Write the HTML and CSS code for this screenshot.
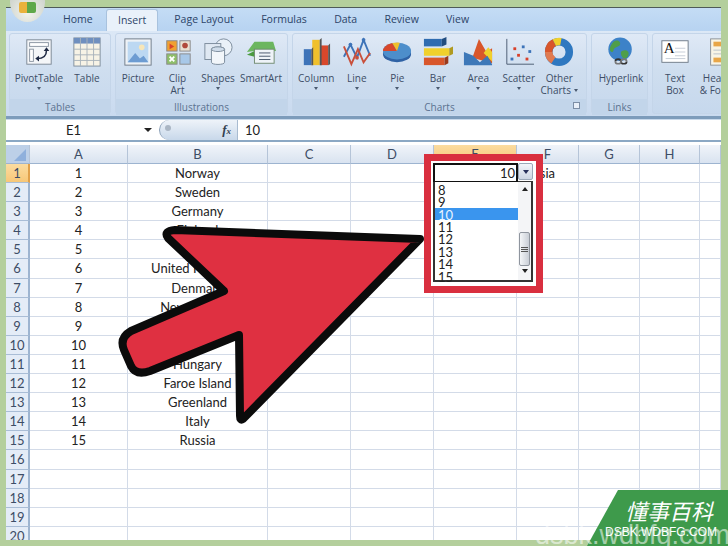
FILE: index.html
```html
<!DOCTYPE html>
<html lang="en">
<head>
  <meta charset="UTF-8">
  <title>Excel dropdown</title>
  <link rel="stylesheet" href="styles.css">
</head>
<body>
  <div class="window">
    <!-- Tabs -->
    <div class="tabs">
      <span class="tab">Home</span>
      <span class="tab active">Insert</span>
      <span class="tab">Page Layout</span>
      <span class="tab">Formulas</span>
      <span class="tab">Data</span>
      <span class="tab">Review</span>
      <span class="tab">View</span>
    </div>

    <!-- Ribbon -->
    <div class="ribbon">
      <div class="group g-tables">
        <div class="items">
          <div class="item w54">
            <svg class="icon" viewBox="0 0 32 32"><rect x="3" y="3" width="26" height="26" fill="#f4f6f8" stroke="#7c8794"/><rect x="6" y="6" width="20" height="4" fill="#fff" stroke="#8a94a0"/><rect x="6" y="13" width="4" height="13" fill="#fff" stroke="#8a94a0"/><path d="M14 23c6 0 10-3 10-9" fill="none" stroke="#1f2a44" stroke-width="1.6"/><path d="M21 15l3-4 3 4zM16 20l-4 3 4 3z" fill="#1f2a44"/></svg>
            <span class="label">PivotTable</span><i class="caret"></i>
          </div>
          <div class="item w42">
            <svg class="icon" viewBox="0 0 32 32"><rect x="2" y="1" width="28" height="30" fill="#f7f3e6" stroke="#7f8d9d"/><rect x="2" y="1" width="28" height="6" fill="#6f8fbf"/><path d="M2 13h28M2 19h28M2 25h28M9 1v30M16 1v30M23 1v30" stroke="#a9b2bb" fill="none"/></svg>
            <span class="label">Table</span>
          </div>
        </div>
        <div class="group-name">Tables</div>
      </div>

      <div class="group g-illus">
        <div class="items">
          <div class="item w40">
            <svg class="icon" viewBox="0 0 32 32"><rect x="2" y="2" width="28" height="28" fill="#eef2f6" stroke="#6f7b88"/><rect x="5" y="5" width="22" height="22" fill="#bcd8f2"/><circle cx="20" cy="11" r="3" fill="#f7e6b8"/><path d="M5 27l8-10 5 6 4-3 5 7z" fill="#6d9cd2"/></svg>
            <span class="label">Picture</span>
          </div>
          <div class="item w39">
            <svg class="icon" viewBox="0 0 32 32"><rect x="4" y="4" width="11" height="11" fill="#f0a030" stroke="#8a8a8a"/><path d="M7 7l5 3-5 3z" fill="#d8402a"/><rect x="18" y="4" width="11" height="11" fill="#e8e0d0" stroke="#8a8a8a"/><circle cx="23.500" cy="9" r="3" fill="#b04a3a"/><rect x="4" y="18" width="11" height="11" fill="#8fc06a" stroke="#8a8a8a"/><path d="M7 21l5 5M12 21l-5 5" stroke="#fff" stroke-width="2"/><rect x="18" y="18" width="11" height="11" fill="#a8c8e8" stroke="#8a8a8a"/></svg>
            <span class="label">Clip<br>Art</span>
          </div>
          <div class="item w42">
            <svg class="icon" viewBox="0 0 32 32"><circle cx="22" cy="11" r="9" fill="#eaf1f8" stroke="#7a8a9a"/><rect x="2" y="7" width="17" height="17" fill="#dfe8f2" stroke="#7a8a9a"/><path d="M9 13c0-3 14-3 14 0v14c0 3-14 3-14 0z" fill="#f2f6fa" stroke="#7a8a9a"/><ellipse cx="16" cy="13" rx="7" ry="2.500" fill="#cfdcea" stroke="#7a8a9a"/></svg>
            <span class="label">Shapes</span><i class="caret"></i>
          </div>
          <div class="item w44">
            <svg class="icon" viewBox="0 0 32 32"><path d="M1 16L9 5h20l3 10-3 0H9z" fill="#5fb04f" opacity=".9"/><path d="M1 19l8-4v6z" fill="#4a9a3f"/><rect x="9" y="13" width="21" height="15" fill="#eef3f8" stroke="#6f8a6f"/><path d="M14 17h12M14 20.500h12M14 24h12" stroke="#44546a"/></svg>
            <span class="label">SmartArt</span>
          </div>
        </div>
        <div class="group-name">Illustrations</div>
      </div>

      <div class="group g-charts">
        <div class="items">
          <div class="item w40h">
            <svg class="icon" viewBox="0 0 32 32"><rect x="3" y="13" width="8" height="17" fill="#3d73b8"/><rect x="12" y="3" width="8" height="27" fill="#f0c02c"/><rect x="21" y="9" width="8" height="21" fill="#d8472b"/><path d="M11 13l2-2v19l-2 0zM20 3l2-2v29h-2zM29 9l2-2v22l-2 1z" fill="#555"/></svg>
            <span class="label">Column</span><i class="caret"></i>
          </div>
          <div class="item w40h">
            <svg class="icon" viewBox="0 0 32 32"><path d="M2 21L9 8l7 14 7-19 7 17" fill="none" stroke="#3d73b8" stroke-width="2"/><path d="M2 10l8 19 7-16 6 14 7-10" fill="none" stroke="#c9503c" stroke-width="2"/><circle cx="9" cy="8" r="2" fill="#3d73b8"/><circle cx="16" cy="22" r="2" fill="#c9503c"/><circle cx="23" cy="3" r="2" fill="#3d73b8"/></svg>
            <span class="label">Line</span><i class="caret"></i>
          </div>
          <div class="item w40h">
            <svg class="icon" viewBox="0 0 32 32"><ellipse cx="16" cy="18" rx="15" ry="9" fill="#2f62a5"/><ellipse cx="16" cy="15" rx="15" ry="9" fill="#4d8ecb"/><path d="M16 15L1 15a15 9 0 0 1 10-8.500z" fill="#d8472b"/><path d="M16 15l-5-8.500a15 9 0 0 1 8-.5z" fill="#f0c02c"/></svg>
            <span class="label">Pie</span><i class="caret"></i>
          </div>
          <div class="item w40h">
            <svg class="icon" viewBox="0 0 32 32"><rect x="1" y="2" width="19" height="8" fill="#2f6cb0"/><path d="M20 2l5-2v8l-5 2z" fill="#214d80"/><rect x="1" y="12" width="27" height="8" fill="#f0d02c"/><path d="M28 12l4-2v8l-4 2z" fill="#b09a20"/><rect x="1" y="22" width="22" height="8" fill="#d8562b"/><path d="M23 22l4-2v8l-4 2z" fill="#9a3a1c"/></svg>
            <span class="label">Bar</span><i class="caret"></i>
          </div>
          <div class="item w40h">
            <svg class="icon" viewBox="0 0 32 32"><path d="M10 22l7-20 8 14 6-4v16z" fill="#d8562b"/><path d="M22 17l5-6 4 5v10z" fill="#f0d02c"/><path d="M1 16l10 4 7 7 8-7 5 9v1H1z" fill="#3d78b8"/></svg>
            <span class="label">Area</span><i class="caret"></i>
          </div>
          <div class="item w40h">
            <svg class="icon" viewBox="0 0 32 32"><path d="M3 2v27h29" fill="none" stroke="#4a5a70" stroke-width="1"/><g fill="#d8402a"><rect x="14" y="18" width="3" height="3"/><rect x="23" y="22" width="3" height="3"/><rect x="10" y="11" width="3" height="3"/></g><g fill="#3d73b8"><rect x="7" y="22" width="3" height="3"/><rect x="19" y="9" width="3" height="3"/><rect x="26" y="14" width="3" height="3"/></g></svg>
            <span class="label">Scatter</span><i class="caret"></i>
          </div>
          <div class="item w40h">
            <svg class="icon" viewBox="0 0 32 32"><circle cx="16" cy="16" r="11" fill="none" stroke="#2f78c0" stroke-width="8"/><path d="M5 16A11 11 0 0 1 11 6" fill="none" stroke="#d8562b" stroke-width="8"/><path d="M11 6a11 11 0 0 1 7-1" fill="none" stroke="#f0d02c" stroke-width="8"/><path d="M5 16a11 11 0 0 0 5 9" fill="none" stroke="#e07a50" stroke-width="8"/></svg>
            <span class="label">Other<br>Charts<i class="caret side"></i></span>
          </div>
        </div>
        <div class="group-name">Charts<i class="launcher"></i></div>
      </div>

      <div class="group g-links">
        <div class="items">
          <div class="item w54">
            <svg class="icon" viewBox="0 0 32 32"><circle cx="15" cy="13" r="12.500" fill="#3d82c8"/><path d="M8 5c4-3 8 0 7 3s-6 2-7 6-4 1-4-1 2-6 4-8zM17 15c4-2 8 0 7 4s-4 5-6 3-3-6-1-7z" fill="#4f9e4a"/><path d="M10 26a3 2.500 0 0 1 6 0M16 26a3 2.500 0 0 0 6 0" fill="none" stroke="#333" stroke-width="1.800"/><path d="M10 26a3 2.500 0 0 0 6 0M16 26a3 2.500 0 0 1 6 0" fill="none" stroke="#777" stroke-width="1.800"/></svg>
            <span class="label">Hyperlink</span>
          </div>
        </div>
        <div class="group-name">Links</div>
      </div>

      <div class="group g-text">
        <div class="items">
          <div class="item w40">
            <svg class="icon" viewBox="0 0 32 32"><rect x="2" y="4" width="28" height="23" fill="#fff" stroke="#6f7b88"/><path d="M16 12h11M16 16h11M16 20h11M6 23h21" stroke="#c4ccd6"/><text x="4" y="17" class="icon-a">A</text></svg>
            <span class="label">Text<br>Box</span>
          </div>
          <div class="item w50">
            <svg class="icon" viewBox="0 0 32 32"><rect x="6" y="2" width="22" height="28" fill="#f8f4e6" stroke="#8a8f96"/><rect x="9" y="5" width="16" height="5" fill="#e8a648"/><rect x="9" y="22" width="16" height="5" fill="#e8a648"/><path d="M9 14h16M9 18h16" stroke="#b9c0c8"/></svg>
            <span class="label">Header<br>&amp; Footer</span>
          </div>
        </div>
      </div>
    </div>

    <!-- Formula bar -->
    <div class="formula-bar">
      <div class="name-box">E1<i class="name-arrow"></i></div>
      <div class="fx-pill"><i class="fx-knob"></i><span class="fx">f<small>x</small></span></div>
      <div class="formula">10</div>
    </div>

    <!-- Sheet -->
    <div class="sheet">
      <div class="row head"><div class="corner"><i></i></div><div>A</div><div>B</div><div>C</div><div>D</div><div class="hot">E</div><div>F</div><div>G</div><div>H</div><div></div></div>
      <div class="row"><div class="num hot">1</div><div>1</div><div>Norway</div><div></div><div></div><div></div><div class="left">Russia</div><div></div><div></div><div></div></div>
      <div class="row"><div class="num">2</div><div>2</div><div>Sweden</div><div></div><div></div><div></div><div></div><div></div><div></div><div></div></div>
      <div class="row"><div class="num">3</div><div>3</div><div>Germany</div><div></div><div></div><div></div><div></div><div></div><div></div><div></div></div>
      <div class="row"><div class="num">4</div><div>4</div><div>Finland</div><div></div><div></div><div></div><div></div><div></div><div></div><div></div></div>
      <div class="row"><div class="num">5</div><div>5</div><div>France</div><div></div><div></div><div></div><div></div><div></div><div></div><div></div></div>
      <div class="row"><div class="num">6</div><div>6</div><div>United Kingdom</div><div></div><div></div><div></div><div></div><div></div><div></div><div></div></div>
      <div class="row"><div class="num">7</div><div>7</div><div>Denmark</div><div></div><div></div><div></div><div></div><div></div><div></div><div></div></div>
      <div class="row"><div class="num">8</div><div>8</div><div>New Zealand</div><div></div><div></div><div></div><div></div><div></div><div></div><div></div></div>
      <div class="row"><div class="num">9</div><div>9</div><div></div><div></div><div></div><div></div><div></div><div></div><div></div><div></div></div>
      <div class="row"><div class="num">10</div><div>10</div><div></div><div></div><div></div><div></div><div></div><div></div><div></div><div></div></div>
      <div class="row"><div class="num">11</div><div>11</div><div>Hungary</div><div></div><div></div><div></div><div></div><div></div><div></div><div></div></div>
      <div class="row"><div class="num">12</div><div>12</div><div>Faroe Island</div><div></div><div></div><div></div><div></div><div></div><div></div><div></div></div>
      <div class="row"><div class="num">13</div><div>13</div><div>Greenland</div><div></div><div></div><div></div><div></div><div></div><div></div><div></div></div>
      <div class="row"><div class="num">14</div><div>14</div><div>Italy</div><div></div><div></div><div></div><div></div><div></div><div></div><div></div></div>
      <div class="row"><div class="num">15</div><div>15</div><div>Russia</div><div></div><div></div><div></div><div></div><div></div><div></div><div></div></div>
      <div class="row"><div class="num">16</div><div></div><div></div><div></div><div></div><div></div><div></div><div></div><div></div><div></div></div>
      <div class="row"><div class="num">17</div><div></div><div></div><div></div><div></div><div></div><div></div><div></div><div></div><div></div></div>
      <div class="row"><div class="num">18</div><div></div><div></div><div></div><div></div><div></div><div></div><div></div><div></div><div></div></div>
      <div class="row"><div class="num">19</div><div></div><div></div><div></div><div></div><div></div><div></div><div></div><div></div><div></div></div>
      <div class="row"><div class="num">20</div><div></div><div></div><div></div><div></div><div></div><div></div><div></div><div></div><div></div></div>
    </div>
  </div>

  <!-- Office button -->
  <div class="office"><i></i></div>

  <!-- Big arrow -->
  <svg class="arrow" viewBox="0 0 728 546">
    <path d="M175 230L420 239L243 419Q240 421 240 416L239 335L150 371Q136 376 131 366L124 350Q119 338 131 331L224 291L168 238Q163 231 175 230Z" fill="#df3041" stroke="#0b0b0b" stroke-width="8" stroke-linejoin="round"/>
  </svg>

  <!-- Dropdown with red frame -->
  <div class="frame">
    <div class="combo">
      <div class="combo-cell">10</div>
      <div class="combo-btn"><i></i></div>
    </div>
    <div class="list">
      <div class="options">
        <div>8</div><div>9</div><div class="picked">10</div><div>11</div><div>12</div><div>13</div><div>14</div><div>15</div>
      </div>
      <div class="scroll">
        <i class="up"></i>
        <div class="thumb"><b></b><b></b><b></b></div>
        <i class="down"></i>
      </div>
    </div>
  </div>

  <!-- Watermark -->
  <div class="badge">
    <div class="badge-cn">懂事百科</div>
    <div class="badge-en">DSBK.WDBFG.COM</div>
  </div>
  <div class="mark">dsbk.wdbfg.com</div>
</body>
</html>
```

FILE: styles.css
```css
/* General Reset */
* {
  margin: 0;
  padding: 0;
  box-sizing: border-box;
}

html, body {
  width: 728px;
  height: 546px;
  overflow: hidden;
}

body {
  position: relative;
  background-color: #b4cf9c;
  padding: 7px 7px 6px 6px;
  font-family: 'Open Sans', sans-serif;
}

i {
  display: block;
}

/* Window */
.window {
  height: 533px;
  overflow: hidden;
  display: flex;
  flex-direction: column;
  background-color: #fff;
  border-top: 1px solid #4e5a58;
}

/* Tabs */
.tabs {
  height: 23px;
  flex: none;
  display: flex;
  align-items: flex-end;
  padding-left: 45px;
  background: linear-gradient(#c4dcf5, #b7d3f1);
  font-size: 10.5px;
  color: #2c4468;
}

.tab {
  padding: 0 12px 2px;
  height: 21px;
  line-height: 19px;
  margin-right: 3.3px;
}

.tab.active {
  margin: 0 4px 0 -2px;
  padding: 0 11px;
  height: 22px;
  line-height: 20px;
  background-color: #e9f1fa;
  border: 1px solid #a8c2de;
  border-bottom: none;
  border-radius: 3px 3px 0 0;
}

/* Ribbon */
.ribbon {
  height: 85px;
  flex: none;
  display: flex;
  gap: 4px;
  padding: 2px 0 1px 3px;
  background: linear-gradient(#dce8f6, #c9daef);
  overflow: hidden;
}

.group {
  flex: none;
  height: 81px;
  display: flex;
  flex-direction: column;
  border: 1px solid #c4d5e9;
  border-radius: 3px;
  background: linear-gradient(#dfe9f6 0, #cfdeef 45%, #c6d8ed 100%);
}

.g-tables { width: 102px; }
.g-illus { width: 173px; }
.g-charts { width: 295px; }
.g-links { width: 57px; }
.g-text { width: 80px; }

.items {
  height: 65px;
  flex: none;
  display: flex;
  padding: 3px 2px 0;
}

.g-charts .items {
  padding: 3px 3px 0;
}

.item {
  flex: none;
  display: flex;
  flex-direction: column;
  align-items: center;
  text-align: center;
}

.w54 { width: 54px; }
.w50 { width: 50px; }
.w44 { width: 44px; }
.w42 { width: 42px; }
.w40 { width: 40px; }
.w40h { width: 40.5px; }
.w39 { width: 39px; }

.icon {
  width: 30px;
  height: 30px;
  margin-bottom: 5px;
  flex: none;
}

.icon-a {
  font-family: 'Liberation Serif', serif;
  font-size: 16px;
  fill: #111;
}

.label {
  font-size: 10px;
  line-height: 12px;
  color: #3d4d66;
  white-space: nowrap;
}

.caret {
  width: 0;
  height: 0;
  margin-top: 3px;
  border: 2.5px solid transparent;
  border-top: 3px solid #4a5a70;
  border-bottom: none;
}

.caret.side {
  display: inline-block;
  margin: 0 0 2px 3px;
}

.group-name {
  position: relative;
  flex: 1;
  text-align: center;
  font-size: 10px;
  line-height: 16px;
  color: #5b7290;
  background-color: #c2d5ea;
}

.launcher {
  position: absolute;
  right: 6px;
  top: 3px;
  width: 7px;
  height: 7px;
  border: 1px solid #7c8ea6;
  background-color: #e8eff8;
}

/* Formula bar */
.formula-bar {
  height: 26px;
  flex: none;
  display: flex;
  background-color: #fff;
  border-top: 3px solid #7d9cbb;
  border-bottom: 2px solid #8ba8c4;
  box-shadow: inset 0 1px 0 #c9daec;
  padding-top: 1px;
  font-family: 'Lato', sans-serif;
  font-size: 13px;
  color: #222;
  margin-bottom: 3px;
}

.name-box {
  width: 153px;
  position: relative;
  text-align: center;
  padding-right: 18px;
  line-height: 20px;
}

.name-arrow {
  position: absolute;
  right: 7px;
  top: 8px;
  border: 4px solid transparent;
  border-top: 4px solid #222;
  border-bottom: none;
}

.fx-pill {
  width: 79px;
  height: 20px;
  position: relative;
  background: linear-gradient(#eef3f9, #c8d8ea);
  border-radius: 12px 0 0 12px;
  border-left: 1px solid #8ba0b8;
  border-right: 1px solid #a8bbd0;
  text-align: right;
  padding-right: 6px;
}

.fx-knob {
  position: absolute;
  left: 5px;
  top: 5px;
  width: 6px;
  height: 6px;
  border-radius: 50%;
  background-color: #aab6c4;
}

.fx {
  font-family: 'Liberation Serif', serif;
  font-style: italic;
  font-weight: bold;
  font-size: 13px;
  line-height: 19px;
  color: #33404f;
}

.fx small {
  font-size: 9px;
}

.formula {
  flex: 1;
  padding-left: 7px;
  line-height: 20px;
}

/* Sheet */
.sheet {
  flex: none;
  background-color: #fff;
  font-family: 'Lato', sans-serif;
  font-size: 13px;
  color: #222;
}

.row {
  display: grid;
  grid-template-columns: 24px 98px 140px 83px 83px 83px 62px 61px 60px 21px;
  height: 19.1px;
  text-align: center;
  line-height: 18px;
}

.row > div {
  border-right: 1px solid #d3dbe8;
  border-bottom: 1px solid #d3dbe8;
  white-space: nowrap;
}

.row > .num {
  background: #e4ecf7;
  border-right: 2px solid #9db4d0;
  border-bottom: 1px solid #a9bdd6;
  color: #3d4d66;
}

.row > .num.hot {
  background: linear-gradient(#fbdca0, #f7c778);
  border-right-color: #e0a04a;
}

.row > .left {
  text-align: left;
  padding-left: 2px;
}

.head {
  height: 19px;
  color: #3d4d66;
}

.head > div {
  background: linear-gradient(#f0f4fa, #d9e3f0);
  border-right: 1px solid #b5c4d8;
  border-bottom: 1px solid #9db4d0;
}

.head > .hot {
  background: linear-gradient(#fbdca0, #f7c778);
}

.head > .corner {
  position: relative;
  background-color: #bdd0e8;
  background-image: none;
}

.corner i {
  position: absolute;
  right: 3px;
  bottom: 2px;
  border-left: 12px solid transparent;
  border-bottom: 12px solid #8fb0dc;
}

/* Office button */
.office {
  position: absolute;
  left: 10px;
  top: -18px;
  width: 35px;
  height: 40px;
  border-radius: 50%;
  background: radial-gradient(circle at 50% 75%, #f4f4ee, #c9cfc8 70%, #8f968f);
  display: flex;
  justify-content: center;
  align-items: flex-end;
  padding-bottom: 9px;
}

.office i {
  width: 17px;
  height: 11px;
  border-radius: 2px;
  background: linear-gradient(90deg, #eab23c 50%, #5fa84a 50%);
}

/* Arrow */
.arrow {
  position: absolute;
  left: 0;
  top: 0;
  width: 728px;
  height: 546px;
}

/* Dropdown */
.frame {
  position: absolute;
  left: 424px;
  top: 154px;
  width: 119px;
  height: 139px;
  border: 7px solid #d92f3f;
  background-color: #fff;
  padding: 2px;
  font-family: 'Lato', sans-serif;
  font-size: 13px;
  color: #222;
}

.combo {
  height: 19px;
  display: flex;
}

.combo-cell {
  width: 85px;
  height: 19px;
  border: 2px solid #111;
  border-bottom-width: 1px;
  text-align: right;
  padding-right: 1px;
  line-height: 17px;
}

.combo-btn {
  width: 15px;
  height: 17px;
  background: linear-gradient(#f2f5f9, #ccd6e3);
  border: 1px solid #9aa8b8;
  border-radius: 2px;
  display: flex;
  justify-content: center;
  align-items: center;
}

.combo-btn i {
  border: 3.5px solid transparent;
  border-top: 4px solid #26305a;
  border-bottom: none;
}

.list {
  width: 100px;
  height: 101px;
  display: flex;
  border: 1px solid #333;
  border-width: 1px 2px 2px;
  margin-top: -1px;
}

.options {
  width: 83px;
  line-height: 14px;
  padding-top: 0.8px;
}

.options div {
  height: 12.4px;
  padding-left: 3px;
}

.options .picked {
  background-color: #3a95ee;
  color: #e9f4ff;
}

.scroll {
  flex: 1;
  position: relative;
  background-color: #f4f5f7;
}

.scroll .up,
.scroll .down {
  position: absolute;
  left: 4px;
  border: 3.5px solid transparent;
}

.scroll .up {
  top: 5px;
  border-bottom: 4px solid #222;
  border-top: none;
}

.scroll .down {
  bottom: 7px;
  border-top: 4px solid #222;
  border-bottom: none;
}

.thumb {
  position: absolute;
  left: 1px;
  right: 1px;
  top: 50px;
  height: 34px;
  background: linear-gradient(90deg, #f4f6f8, #c9ced6);
  border: 1px solid #8f959e;
  border-radius: 2px;
  display: flex;
  flex-direction: column;
  justify-content: center;
  align-items: center;
  gap: 1px;
}

.thumb b {
  width: 7px;
  height: 1px;
  background-color: #555;
}

/* Watermark */
.badge {
  position: absolute;
  left: 587px;
  top: 490px;
  width: 141px;
  height: 56px;
  background-color: #3e9a4b;
  clip-path: polygon(31px 0, 100% 0, 100% 100%, 0 100%);
  color: #fff;
  text-align: left;
}

.badge-cn {
  font-family: 'Noto Sans CJK SC', sans-serif;
  font-style: italic;
  font-size: 22px;
  line-height: 26px;
  padding: 7px 0 0 38px;
  white-space: nowrap;
}

.badge-en {
  font-family: 'Liberation Sans', sans-serif;
  font-size: 12px;
  line-height: 14px;
  padding: 2px 0 0 18px;
  white-space: nowrap;
}

.mark {
  position: absolute;
  left: 535px;
  top: 517px;
  font-family: 'Liberation Sans', sans-serif;
  font-size: 27px;
  line-height: 36px;
  color: rgba(255, 255, 255, 0.55);
  white-space: nowrap;
}
```
